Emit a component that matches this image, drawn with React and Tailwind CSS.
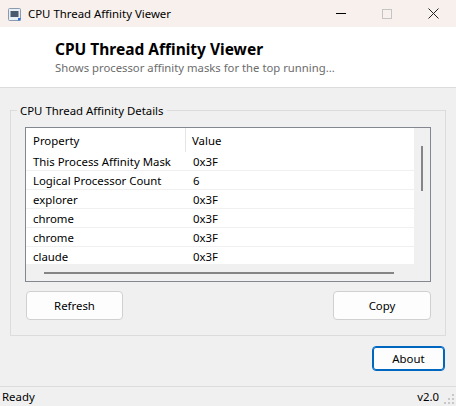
import React from "react";

const rows = [
  ["This Process Affinity Mask", "0x3F"],
  ["Logical Processor Count", "6"],
  ["explorer", "0x3F"],
  ["chrome", "0x3F"],
  ["chrome", "0x3F"],
  ["claude", "0x3F"],
];

const AppIcon = () => (
  <svg width="13" height="13" viewBox="0 0 13 13">
    <rect x="0.5" y="0.5" width="12" height="12" rx="1" fill="#e8eef4" stroke="#8a9bb0" />
    <rect x="2.5" y="3" width="8" height="6" fill="#4a5a6c" />
    <rect x="10" y="10" width="2.5" height="2.5" fill="#2f6fd0" />
  </svg>
);

const Grip = () => (
  <svg width="12" height="12" viewBox="0 0 12 12">
    <rect x="9" y="1" width="2" height="2" fill="#c8c8c8" />
    <rect x="5" y="5" width="2" height="2" fill="#c8c8c8" />
    <rect x="9" y="5" width="2" height="2" fill="#c8c8c8" />
    <rect x="1" y="9" width="2" height="2" fill="#c8c8c8" />
    <rect x="5" y="9" width="2" height="2" fill="#c8c8c8" />
    <rect x="9" y="9" width="2" height="2" fill="#c8c8c8" />
  </svg>
);

const App = () => {
  return (
    <div
      className="w-[456px] h-[406px] flex flex-col bg-[#f0f0f0] text-black overflow-hidden"
      style={{ fontFamily: '"Noto Sans", "Open Sans", sans-serif' }}
    >
      {/* title bar */}
      <div className="h-[27px] flex items-center bg-[#f7f0ec] shrink-0">
        <div className="ml-[8px] mt-[1px] flex items-center">
          <AppIcon />
        </div>
        <span className="ml-[7px] text-[11.4px]">CPU Thread Affinity Viewer</span>
        <div className="ml-auto flex items-center h-full">
          <div className="w-[46px] h-full flex items-center justify-center">
            <div className="w-[10px] h-px bg-black" />
          </div>
          <div className="w-[46px] h-full flex items-center justify-center">
            <div className="w-[10px] h-[10px] border border-[#c4c4c4]" />
          </div>
          <div className="w-[46px] h-full flex items-center justify-center">
            <svg width="11" height="11" viewBox="0 0 11 11">
              <path d="M0.5 0.5 L10.5 10.5 M10.5 0.5 L0.5 10.5" stroke="#222" strokeWidth="1" />
            </svg>
          </div>
        </div>
      </div>

      {/* header */}
      <div className="h-[61px] bg-white border-b border-[#dcdcdc] shrink-0 pl-[55px] pt-[12px]">
        <div className="text-[15.5px] font-bold leading-[20px]">CPU Thread Affinity Viewer</div>
        <div className="text-[11.3px] text-[#6d6d6d] leading-[16px] mt-[1px]">
          Shows processor affinity masks for the top running...
        </div>
      </div>

      {/* group box */}
      <div className="relative mx-[10px] mt-[22px] h-[226px] border border-[#dcdcdc] shrink-0">
        <span className="absolute left-[6px] -top-[9px] px-[3px] bg-[#f0f0f0] text-[11.4px] leading-[18px]">
          CPU Thread Affinity Details
        </span>
        <div className="ml-[14px] mt-[16px] w-[406px] h-[155px] border border-[#828790] bg-white flex flex-col">
          <div className="flex flex-1 min-h-0">
            <div className="flex-1 flex flex-col text-[11.4px]">
              <div className="h-[24px] flex shrink-0 leading-[26px]">
                <div className="w-[160px] pl-[7px] border-r border-[#e5e5e5]">Property</div>
                <div className="flex-1 pl-[6px]">Value</div>
              </div>
              <div className="flex-1 overflow-hidden">
                {rows.map((r, i) => (
                  <div key={i} className="h-[19px] flex border-b border-[#f0f0f0] leading-[20px]">
                    <div className="w-[160px] pl-[7px]">{r[0]}</div>
                    <div className="flex-1 pl-[7px]">{r[1]}</div>
                  </div>
                ))}
              </div>
            </div>
            <div className="w-[16px] bg-[#f0f0f0] flex justify-center pt-[18px] shrink-0">
              <div className="w-[2px] h-[45px] bg-[#858585]" />
            </div>
          </div>
          <div className="h-[17px] bg-[#f0f0f0] shrink-0 flex items-center pl-[18px]">
            <div className="w-[350px] h-[2px] bg-[#858585]" />
          </div>
        </div>
        <div className="flex justify-between ml-[15px] mr-[14px] mt-[9px]">
          <button className="w-[97px] h-[29px] bg-[#fdfdfd] border border-[#d0d0d0] rounded-[4px] text-[11.4px]">
            Refresh
          </button>
          <button className="w-[98px] h-[29px] bg-[#fdfdfd] border border-[#d0d0d0] rounded-[4px] text-[11.4px]">
            Copy
          </button>
        </div>
      </div>

      {/* about */}
      <div className="flex justify-end pr-[11px] mt-[10px] shrink-0">
        <button className="w-[73px] h-[25px] bg-[#fdfdfd] border border-[#0067c0] rounded-[4px] text-[11.4px] shadow-[inset_0_0_0_1px_#0067c0]">
          About
        </button>
      </div>

      {/* status bar */}
      <div className="mt-auto h-[20px] border-t border-[#dcdcdc] flex items-center text-[11.4px] shrink-0">
        <span className="pl-[2px] leading-[20px] mt-[1px]">Ready</span>
        <span className="ml-auto mr-[4px] leading-[20px] mt-[1px]">v2.0</span>
        <div className="self-end mb-[1px] mr-[1px]">
          <Grip />
        </div>
      </div>
    </div>
  );
};

export default App;
